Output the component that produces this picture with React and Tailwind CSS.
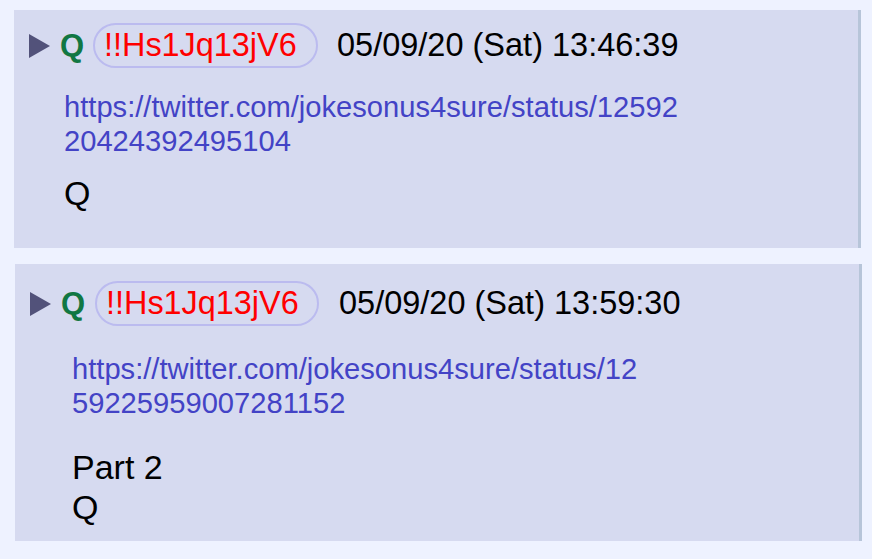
import React from "react";

function Triangle() {
  return (
    <svg width="21" height="24" viewBox="0 0 21 24" className="shrink-0">
      <polygon points="0,0 21,12 0,24" fill="#52527a" />
    </svg>
  );
}

function Header({ pillW, pillMl, dateMl, date }) {
  return (
    <div className="flex items-center h-[45px]">
      <div className="ml-[15px]">
        <Triangle />
      </div>
      <span className="ml-[10px] w-[23px] text-[31px] font-bold text-[#117743] leading-none">Q</span>
      <span
        className={`${pillMl} ${pillW} h-[45px] flex items-center pl-[9px] rounded-full border-2 border-[#bbbbef] text-[32.4px] text-[#ff0000] leading-none whitespace-nowrap`}
      >
        !!Hs1Jq13jV6
      </span>
      <span className={`${dateMl} text-[32.5px] text-black leading-none whitespace-nowrap`}>{date}</span>
    </div>
  );
}

export default function App() {
  return (
    <div
      className="w-[872px] h-[559px] bg-[#eef2ff] overflow-hidden pt-[10px]"
      style={{ fontFamily: '"Liberation Sans", Arial, sans-serif' }}
    >
      {/* Post 1 */}
      <div className="ml-[14px] w-[847px] h-[238px] bg-[#d6daf0] border-r-[3px] border-[#b7c5d9] pt-[13px]">
        <Header pillW="w-[225px]" pillMl="ml-[10px]" dateMl="ml-[19px]" date="05/09/20 (Sat) 13:46:39" />
        <div className="pl-[50px] mt-[22px] text-[29.15px] leading-[34px] text-[#4343c6]">
          <div>https://twitter.com/jokesonus4sure/status/12592</div>
          <div>20424392495104</div>
        </div>
        <div className="pl-[50px] mt-[15px] text-[34px] leading-[40px] text-black">Q</div>
      </div>

      {/* Post 2 */}
      <div className="ml-[15px] mt-[16px] w-[847px] h-[277px] bg-[#d6daf0] border-r-[3px] border-[#b7c5d9] pt-[17px]">
        <Header pillW="w-[224px]" pillMl="ml-[11px]" dateMl="ml-[20px]" date="05/09/20 (Sat) 13:59:30" />
        <div className="pl-[57px] mt-[26px] text-[29.15px] leading-[34px] text-[#4343c6]">
          <div>https://twitter.com/jokesonus4sure/status/12</div>
          <div>59225959007281152</div>
        </div>
        <div className="pl-[57px] mt-[27px] text-[34px] leading-[40px] text-black">
          <div>Part 2</div>
          <div>Q</div>
        </div>
      </div>
    </div>
  );
}
